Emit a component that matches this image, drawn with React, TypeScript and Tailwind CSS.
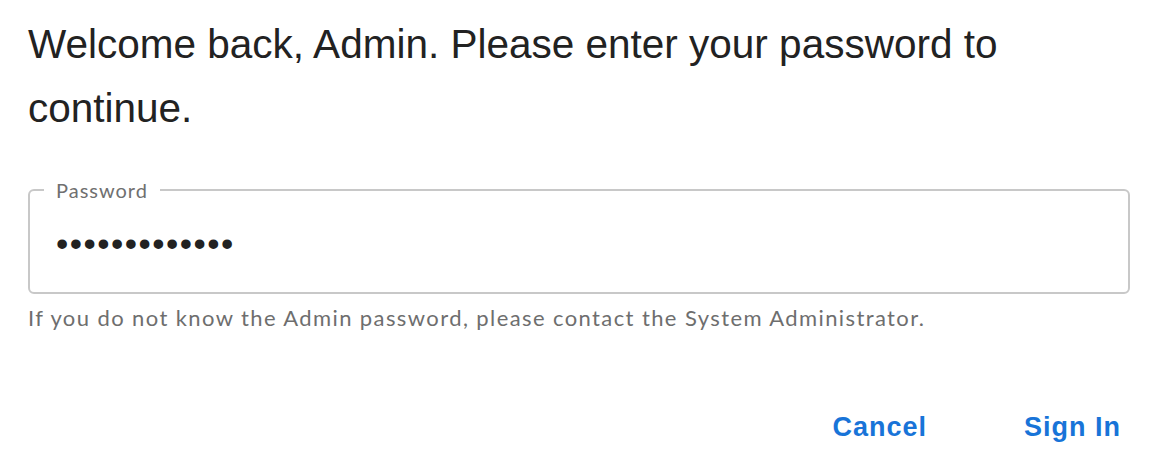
export default function App() {
  return (
    <div className="w-[1156px] h-[466px] bg-white px-[28px] pt-[12px] font-['Liberation_Sans',Arial,sans-serif]">
      <h1 className="text-[40.5px] leading-[64px] text-[#222222] font-normal w-[1100px]">
        Welcome back, Admin. Please enter your password to continue.
      </h1>
      <fieldset className="mt-[40px] w-[1102px] h-[114px] border-2 border-[#c8c8c8] rounded-[6px] px-0 flex items-center">
        <legend className="ml-[14px] px-[12px] text-[20px] leading-[20px] text-[#707070] font-['Lato',sans-serif] tracking-[1px]">
          Password
        </legend>
        <div className="pl-[26px] -mt-[4px] text-[35px] leading-[30px] text-[#222222] tracking-[1.5px] font-['Liberation_Sans',sans-serif]">
          •••••••••••••
        </div>
      </fieldset>
      <p className="mt-[12px] text-[22px] leading-[24px] text-[#6e6e6e] font-['Lato',sans-serif] tracking-[1.4px]">
        If you do not know the Admin password, please contact the System Administrator.
      </p>
      <div className="mt-[81px] flex justify-end gap-[97px] pr-[7px]">
        <button className="text-[27px] leading-[32px] font-bold text-[#1874d8] tracking-[1px]">Cancel</button>
        <button className="text-[27px] leading-[32px] font-bold text-[#1874d8] tracking-[1px]">Sign In</button>
      </div>
    </div>
  );
}
